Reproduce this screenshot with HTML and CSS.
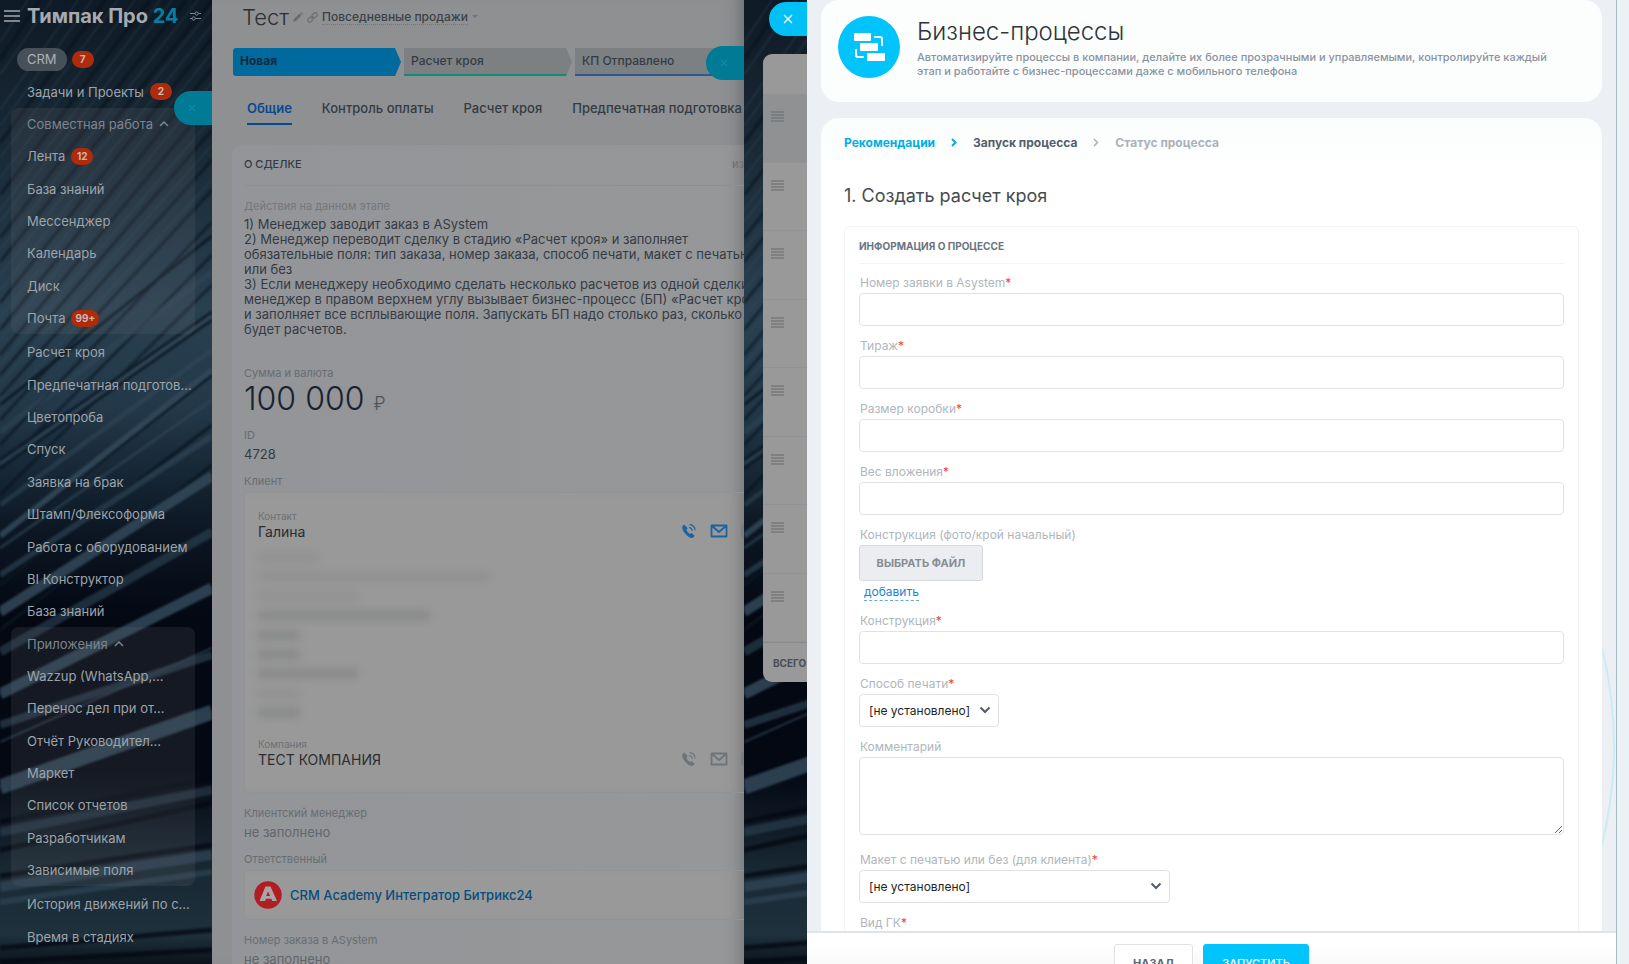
FILE: index.html
```html
<!DOCTYPE html>
<html lang="ru">
<head>
<meta charset="utf-8">
<title>Тимпак Про 24</title>
<link rel="stylesheet" href="styles.css">
</head>
<body>
<svg class="sprite" aria-hidden="true">
  <symbol id="phone" viewBox="0 0 16 16"><path fill="currentColor" d="M3.2 1.6 1.6 3c-.8 1-.4 4 2 7s5.400 5 7.400 5c1 0 2.300-1 2.500-2.200L10.800 10l-1.800 1C7.500 10.200 6 8.200 5.500 6.700L6.700 5.300z"/><path fill="none" stroke="currentColor" stroke-width="1.200" d="M8 4.500c1.800.1 3 1.400 3.200 3.300M8.600 1.600c3.100.2 5.200 2.300 5.500 5.600"/></symbol>
  <symbol id="mail" viewBox="0 0 18 16"><path fill="none" stroke="currentColor" stroke-width="1.800" stroke-linejoin="round" d="M1.500 2.500h15v11h-15zM2 3l7 6 7-6"/></symbol>
  <symbol id="grip" viewBox="0 0 13 11"><path stroke="currentColor" stroke-width="1.500" d="M0 1h13M0 4h13M0 7h13M0 10h13"/></symbol>
  <symbol id="down" viewBox="0 0 12 8"><path fill="none" stroke="currentColor" stroke-width="2" d="m1.500 1.500 4.500 4.500 4.500-4.500"/></symbol>
  <symbol id="up" viewBox="0 0 10 6"><path fill="none" stroke="currentColor" stroke-width="1.500" d="m1 5 4-4 4 4"/></symbol>
  <symbol id="close" viewBox="0 0 10 10"><path stroke="currentColor" stroke-width="1.300" d="m1 1 8 8M9 1 1 9"/></symbol>
  <symbol id="streaks" viewBox="0 0 212 964" preserveAspectRatio="none">
    <g fill="none" stroke="#3c5364" stroke-width="1" opacity=".75">
      <path d="M0 42 28 0M0 75 52 0M0 110 78 0M0 126 92 0M0 158 118 0M0 178 135 0M0 210 160 0M0 222 172 0M0 250 198 0M0 275 212 8M0 290 212 25M0 318 212 52M0 340 212 82M0 365 212 118M0 384 212 145M0 408 212 180"/>
    </g>
    <g fill="none" stroke="#050e18" stroke-width="3" opacity=".6">
      <path d="M0 60 40 0M0 143 105 0M0 195 150 0M0 238 186 0M0 262 212 0M0 303 212 38M0 330 212 68M0 355 212 100M0 375 212 130M0 396 212 160M0 420 212 190M0 445 212 222M0 470 212 255M0 495 212 285"/>
    </g>
    <g fill="none" stroke="#0a1722" stroke-width="3"><path d="M0 405 212 236M0 460 212 312M0 468 212 320M0 540 212 375M0 585 212 425M0 630 212 465"/></g>
    <g fill="none" stroke="#33495a">
      <path stroke-width="6" opacity=".55" d="M0 432 212 272"/>
      <path stroke-width="4" opacity=".7" d="M0 464 212 316"/>
      <path stroke-width="5" opacity=".6" d="M0 505 212 350"/>
      <path stroke-width="6" d="M0 536 212 370"/>
      <path stroke-width="3" opacity=".7" d="M0 548 212 400"/>
      <path stroke-width="6" opacity=".7" d="M0 575 212 436"/>
      <path stroke-width="10" d="M0 612 212 476"/>
      <path stroke-width="9" opacity=".65" d="M0 652 212 532"/>
      <path stroke-width="11" d="M0 694 212 588"/>
      <path stroke-width="2" opacity=".8" d="M0 742 212 648"/>
      <path stroke-width="8" opacity=".7" d="M0 725 212 655"/>
      <path stroke-width="15" d="M0 787 212 712"/>
      <path stroke-width="9" opacity=".6" d="M0 832 212 790"/>
      <path stroke-width="10" opacity=".8" d="M0 887 212 855"/>
      <path stroke-width="6" opacity=".7" d="M0 902 212 872"/>
    </g>
    <g fill="none" stroke="#020710" stroke-width="5" opacity=".85"><path d="M0 822 212 778M0 850 212 803M0 876 212 845M0 948 212 930M0 962 212 950"/></g>
  </symbol>
</svg>

<div class="app">
  <aside class="sidebar">
    <svg class="streaks"><use href="#streaks"/></svg>
    <header class="brand">
      <button class="plain" aria-label="Меню"><svg width="16" height="12" viewBox="0 0 16 12"><path stroke="currentColor" stroke-width="2" d="M0 1h16M0 6h16M0 11h16"/></svg></button>
      <strong class="brand-name">Тимпак Про <span class="brand-num">24</span></strong>
      <button class="plain" aria-label="Настройки"><svg width="11" height="10" viewBox="0 0 11 10"><path fill="none" stroke="currentColor" stroke-width="1.200" d="M0 2.500h5M8.500 2.500H11M0 7.500h2M5.500 7.500H11"/><circle cx="6.700" cy="2.500" r="1.600" fill="none" stroke="currentColor"/><circle cx="3.700" cy="7.500" r="1.600" fill="none" stroke="currentColor"/></svg></button>
    </header>
    <nav class="menu">
      <a class="item" href="#"><span class="active">CRM</span><b class="badge">7</b></a>
      <a class="item" href="#">Задачи и Проекты<b class="badge">2</b></a>
      <div class="group g7">
        <a class="item muted" href="#">Совместная работа<svg width="10" height="6"><use href="#up"/></svg></a>
        <a class="item" href="#">Лента<b class="badge">12</b></a>
        <a class="item" href="#">База знаний</a>
        <a class="item" href="#">Мессенджер</a>
        <a class="item" href="#">Календарь</a>
        <a class="item" href="#">Диск</a>
        <a class="item" href="#">Почта<b class="badge">99+</b></a>
      </div>
      <a class="item" href="#">Расчет кроя</a>
      <a class="item" href="#">Предпечатная подготов...</a>
      <a class="item" href="#">Цветопроба</a>
      <a class="item" href="#">Спуск</a>
      <a class="item" href="#">Заявка на брак</a>
      <a class="item" href="#">Штамп/Флексоформа</a>
      <a class="item" href="#">Работа с оборудованием</a>
      <a class="item" href="#">BI Конструктор</a>
      <a class="item" href="#">База знаний</a>
      <div class="group g8">
        <a class="item muted" href="#">Приложения<svg width="10" height="6"><use href="#up"/></svg></a>
        <a class="item" href="#">Wazzup (WhatsApp,...</a>
        <a class="item" href="#">Перенос дел при от...</a>
        <a class="item" href="#">Отчёт Руководител...</a>
        <a class="item" href="#">Маркет</a>
        <a class="item" href="#">Список отчетов</a>
        <a class="item" href="#">Разработчикам</a>
        <a class="item" href="#">Зависимые поля</a>
      </div>
      <a class="item" href="#">История движений по с...</a>
      <a class="item" href="#">Время в стадиях</a>
    </nav>
    <button class="tab tab-side" aria-label="Закрыть"><svg width="8" height="8"><use href="#close"/></svg></button>
  </aside>

  <main class="deal">
    <header class="deal-head">
      <h1 class="deal-title">Тест</h1>
      <svg width="10" height="10" viewBox="0 0 10 10"><path fill="#676b70" d="m0 10 1-3 5.500-5.500 2 2L3 9zM7.200.8 8 0l2 2-.8.800z"/></svg>
      <svg width="11" height="11" viewBox="0 0 11 11"><g fill="none" stroke="#6d7175" stroke-width="1.200" transform="rotate(-45 5.500 5.500)"><rect x="-.5" y="3.500" width="6" height="4" rx="2"/><rect x="5.500" y="3.500" width="6" height="4" rx="2"/><path d="M3.500 5.500h4"/></g></svg>
      <span class="funnel">Повседневные продажи</span>
      <svg width="6" height="4" viewBox="0 0 6 4"><path fill="#73777b" d="M0 0h6L3 3z"/></svg>
    </header>
    <div class="stages">
      <div class="stage stage-now">Новая</div>
      <div class="stage stage-green">Расчет кроя</div>
      <div class="stage stage-blue">КП Отправлено</div>
    </div>
    <nav class="deal-tabs">
      <a class="deal-tab current" href="#">Общие</a>
      <a class="deal-tab" href="#">Контроль оплаты</a>
      <a class="deal-tab" href="#">Расчет кроя</a>
      <a class="deal-tab" href="#">Предпечатная подготовка</a>
    </nav>
    <section class="about">
      <header class="about-head"><h2 class="about-title">О СДЕЛКЕ</h2><a class="edit" href="#">изменить</a></header>
      <div class="label first">Действия на данном этапе</div>
      <p class="steps">1) Менеджер заводит заказ в ASystem<br>2) Менеджер переводит сделку в стадию «Расчет кроя» и заполняет<br>обязательные поля: тип заказа, номер заказа, способ печати, макет с печатью<br>или без<br>3) Если менеджеру необходимо сделать несколько расчетов из одной сделки,<br>менеджер в правом верхнем углу вызывает бизнес-процесс (БП) «Расчет кроя»<br>и заполняет все всплывающие поля. Запускать БП надо столько раз, сколько<br>будет расчетов.</p>
      <div class="label">Сумма и валюта</div>
      <div class="sum">100 000 <span class="rub">₽</span></div>
      <div class="label">ID</div>
      <div class="value">4728</div>
      <div class="label">Клиент</div>
      <div class="client">
        <div class="person">
          <div><div class="small">Контакт</div><div class="name">Галина</div></div>
          <div class="acts on"><svg width="16" height="16"><use href="#phone"/></svg><svg width="18" height="16"><use href="#mail"/></svg><i class="chat"></i></div>
        </div>
        <div class="hidden-data" aria-hidden="true">
          <i class="smear w60 faint"></i><i class="smear w230 faint"></i><i class="smear w100 faint"></i><i class="smear w170"></i><i class="smear w40"></i><i class="smear w40"></i><i class="smear w100"></i><i class="smear w40 faint"></i><i class="smear w40"></i>
        </div>
        <div class="person">
          <div><div class="small">Компания</div><div class="name">ТЕСТ КОМПАНИЯ</div></div>
          <div class="acts"><svg width="16" height="16"><use href="#phone"/></svg><svg width="18" height="16"><use href="#mail"/></svg><i class="chat"></i></div>
        </div>
      </div>
      <div class="label">Клиентский менеджер</div>
      <div class="value empty">не заполнено</div>
      <div class="label">Ответственный</div>
      <div class="user">
        <svg width="28" height="28" viewBox="0 0 28 28"><circle cx="14" cy="14" r="13.700" fill="#b01e22"/><path fill="#a9a5a5" fill-rule="evenodd" d="M11.500 5.500h5L23 20h-4.700l-1-2.300h-5.200L11 20H5.500zM14.100 10.500l-2 4.500h4z"/></svg>
        <a class="user-link" href="#">CRM Academy Интегратор Битрикс24</a>
      </div>
      <div class="label">Номер заказа в ASystem</div>
      <div class="value empty">не заполнено</div>
    </section>
    <button class="tab tab-deal" aria-label="Закрыть"><svg width="8" height="8"><use href="#close"/></svg></button>
  </main>

  <section class="behind">
    <svg class="streaks"><use href="#streaks"/></svg>
    <div class="list">
      <div class="list-head"></div>
      <div class="rows">
        <div class="row lit"><svg width="13" height="11"><use href="#grip"/></svg></div>
        <div class="row"><svg width="13" height="11"><use href="#grip"/></svg></div>
        <div class="row"><svg width="13" height="11"><use href="#grip"/></svg></div>
        <div class="row"><svg width="13" height="11"><use href="#grip"/></svg></div>
        <div class="row"><svg width="13" height="11"><use href="#grip"/></svg></div>
        <div class="row"><svg width="13" height="11"><use href="#grip"/></svg></div>
        <div class="row"><svg width="13" height="11"><use href="#grip"/></svg></div>
        <div class="row"><svg width="13" height="11"><use href="#grip"/></svg></div>
      </div>
      <div class="list-foot">ВСЕГО</div>
    </div>
    <button class="tab tab-live" aria-label="Закрыть"><svg width="10" height="10"><use href="#close"/></svg></button>
  </section>

  <section class="panel">
    <div class="scroll">
      <svg class="ring" width="14" height="200" viewBox="0 0 14 200"><path fill="none" stroke="#c9edf7" stroke-width="2" d="M0 1Q24 98 0 198"/></svg>
      <header class="hero">
        <svg width="62" height="62" viewBox="0 0 62 62"><circle cx="31" cy="31" r="31" fill="#00c4fb"/><g fill="#fff"><rect x="16" y="17" width="17" height="8" rx="1"/><rect x="22" y="27" width="18" height="8" rx="1"/><rect x="29" y="37" width="18" height="8" rx="1"/></g><path fill="none" stroke="#fff" stroke-width="2" stroke-linecap="round" d="M37 21h5q2 0 2 2v6M18 34v5q0 2 2 2h5"/></svg>
        <div>
          <h2 class="hero-title">Бизнес-процессы</h2>
          <p class="hero-text">Автоматизируйте процессы в компании, делайте их более прозрачными и управляемыми, контролируйте каждый этап и работайте с бизнес-процессами даже с мобильного телефона</p>
        </div>
      </header>
      <form class="card" id="start">
        <ol class="crumbs">
          <li class="crumb done">Рекомендации</li>
          <li class="arrow done"><svg width="6" height="9" viewBox="0 0 6 9"><path fill="none" stroke="currentColor" stroke-width="2" d="m1 1 3.500 3.500L1 8"/></svg></li>
          <li class="crumb now">Запуск процесса</li>
          <li class="arrow"><svg width="6" height="9" viewBox="0 0 6 9"><path fill="none" stroke="currentColor" stroke-width="1.500" d="m1 1 3.500 3.500L1 8"/></svg></li>
          <li class="crumb">Статус процесса</li>
        </ol>
        <h3 class="card-title">1. Создать расчет кроя</h3>
        <div class="box">
          <h4 class="box-title">ИНФОРМАЦИЯ О ПРОЦЕССЕ</h4>
          <div class="field"><label class="flabel" for="f1">Номер заявки в Asystem<span class="req">*</span></label><input class="input" id="f1" type="text"></div>
          <div class="field"><label class="flabel" for="f2">Тираж<span class="req">*</span></label><input class="input" id="f2" type="text"></div>
          <div class="field"><label class="flabel" for="f3">Размер коробки<span class="req">*</span></label><input class="input" id="f3" type="text"></div>
          <div class="field"><label class="flabel" for="f4">Вес вложения<span class="req">*</span></label><input class="input" id="f4" type="text"></div>
          <div class="field file"><label class="flabel" for="f5">Конструкция (фото/крой начальный)</label><button class="choose" id="f5" type="button">ВЫБРАТЬ ФАЙЛ</button><a class="add" href="#">добавить</a></div>
          <div class="field"><label class="flabel" for="f6">Конструкция<span class="req">*</span></label><input class="input" id="f6" type="text"></div>
          <div class="field"><label class="flabel" for="f7">Способ печати<span class="req">*</span></label><div class="pick narrow"><select class="input select" id="f7"><option>[не установлено]</option></select><svg class="chev" width="12" height="8"><use href="#down"/></svg></div></div>
          <div class="field long"><label class="flabel" for="f8">Комментарий</label><textarea class="input area" id="f8"></textarea></div>
          <div class="field"><label class="flabel" for="f9">Макет с печатью или без (для клиента)<span class="req">*</span></label><div class="pick wide"><select class="input select" id="f9"><option>[не установлено]</option></select><svg class="chev" width="12" height="8"><use href="#down"/></svg></div></div>
          <div class="field"><label class="flabel" for="f10">Вид ГК<span class="req">*</span></label><input class="input" id="f10" type="text"></div>
        </div>
      </form>
    </div>
    <footer class="foot">
      <button class="btn" type="button">НАЗАД</button>
      <button class="btn go" type="submit" form="start">ЗАПУСТИТЬ</button>
    </footer>
  </section>
  <div class="edge"></div>
</div>
</body>
</html>
```
FILE: styles.css
```css
* { box-sizing: border-box; }
body { margin: 0; font-family: Inter, "Liberation Sans", sans-serif; font-size: 13px; }
h1, h2, h3, h4, p, ol { margin: 0; padding: 0; font-weight: 400; }
a { color: inherit; text-decoration: none; }
button { font-family: inherit; border: 0; cursor: pointer; }
svg { flex: none; }
.sprite { position: absolute; width: 0; height: 0; }

.app { display: grid; grid-template-columns: 212px minmax(0, 532fr) 63px minmax(0, 810fr) 12px; height: 100vh; overflow: hidden; }
.sidebar, .behind { background: linear-gradient(#0e1a25 0%, #192936 15%, #294050 32%, #23394a 42%, #0c1723 55%, #030813 64%, #030813 80%, #182833 90%, #1e313d 97%, #0a121b 100%); position: relative; min-width: 0; }
.streaks { position: absolute; top: 0; left: 0; width: 100%; height: 100%; opacity: .85; filter: blur(1px); }
.behind .streaks { width: 212px; }
.behind { overflow: hidden; }

.sidebar { display: flex; flex-direction: column; padding-bottom: 11px; color: #9da4aa; }
.brand { position: relative; display: flex; align-items: center; gap: 7px; height: 43px; padding: 0 4px 11px 4px; white-space: nowrap; }
.plain { display: flex; padding: 0; background: none; color: #7e878e; }
.brand-name { margin-right: 4px; font-size: 20px; font-weight: 700; color: #a5abb0; }
.brand-num { color: #087f9e; }
.menu { position: relative; display: flex; flex-direction: column; flex: 1; min-height: 0; }
.item { display: flex; align-items: center; flex: 1 1 0; gap: 6px; padding-left: 27px; font-size: 13px; white-space: nowrap; min-height: 0; }
.active { margin-left: -10px; padding: 3px 10px 4px; border-radius: 12px; background: #474f58; color: #adb2b6; }
.active + .badge { margin-left: -1px; }
.badge { min-width: 22px; padding: 0 4px; border-radius: 9px; background: #b02b0c; color: #cbb7b1; font-size: 10px; line-height: 17px; font-weight: 700; text-align: center; }
.muted { color: #7c858d; }
.group { display: flex; flex-direction: column; margin: 0 17px 2px 11px; border-radius: 8px; background: rgba(110, 112, 120, .17); }
.group .item { padding-left: 16px; }
.g7 { flex: 7 1 0; }
.g8 { flex: 8 1 0; }

.tab { position: absolute; right: 0; display: flex; align-items: center; justify-content: center; width: 38px; height: 34px; padding: 0 2px 0 0; border-radius: 17px 0 0 17px; background: #007a95; color: #0b8fab; }
.tab-side { top: 91px; }
.tab-deal { top: 46px; }
.tab-live { top: 2px; padding-right: 0; background: #00c0f5; color: #fff; }

.deal { position: relative; min-width: 0; overflow: hidden; padding-left: 20px; background: #8e9092; box-shadow: inset -18px 0 18px -16px #66686a; white-space: nowrap; color: #343b44; }
.deal-head { display: flex; align-items: center; gap: 4px; height: 34px; padding-left: 10px; }
.deal-title { font-size: 22px; font-weight: 300; color: #2b2f34; }
.funnel { font-size: 12px; font-weight: 500; color: #3c4147; border-bottom: 1px dotted #777; }
.stages { display: flex; gap: 3px; margin: 14px 0 0 1px; }
.stage { flex: none; width: 168px; height: 28px; padding: 0 7px; border-bottom: 2px solid; font-size: 12px; font-weight: 500; line-height: 26px; background: #7c8083; clip-path: polygon(0 0, 162px 0, 168px 50%, 162px 100%, 0 100%); }
.stage-now { border-color: #006a9f; background: #006a9f; color: #13293a; font-weight: 700; border-radius: 3px; }
.stage-green { border-color: #118a76; }
.stage-blue { border-color: #2b5a96; }
.deal-tabs { display: flex; gap: 30px; margin: 22px 0 0 15px; }
.deal-tab { height: 27px; font-size: 13px; font-weight: 500; line-height: 20px; color: #343b43; }
.current { color: #0a4891; font-weight: 600; border-bottom: 2px solid #0a4891; }

.about { margin-top: 20px; padding: 0 0 0 12px; border-radius: 10px 0 0 0; background: linear-gradient(to right, #939598, #969798); box-shadow: inset -18px 0 18px -16px #707274; min-height: 830px; }
.about-head { display: flex; justify-content: space-between; height: 41px; border-bottom: 1px solid #8d8f91; line-height: 38px; }
.about-title { font-size: 11px; font-weight: 500; color: #343b43; }
.edit { width: 12px; overflow: hidden; font-size: 11px; color: #6a6e73; }
.label { height: 15px; font-size: 11px; line-height: 15px; color: #686d73; }
.first { margin-top: 13px; color: #74777b; }
.steps { margin: 3px 0 29px; font-size: 13px; line-height: 15px; }
.sum { height: 35px; margin-bottom: 12px; font-size: 32px; font-weight: 300; line-height: 36px; color: #182230; }
.rub { font-size: 18px; color: #4d5359; }
.value { height: 22px; margin-bottom: 9px; font-size: 13px; line-height: 22px; }
.empty { color: #61666c; }
.client { height: 301px; margin: 3px 0 13px; padding: 16px 0 0 13px; border: 1px solid #929395; border-right: 0; border-radius: 4px 0 0 4px; background: #999; box-shadow: inset -18px 0 18px -16px #747474; }
.person { display: flex; justify-content: space-between; align-items: flex-end; }
.small { font-size: 10px; line-height: 14px; color: #6d7074; }
.name { font-size: 14px; line-height: 18px; color: #2b2d30; }
.acts { display: flex; align-items: center; gap: 13px; height: 20px; color: #6f7478; overflow: hidden; }
.on { color: #1e639f; }
.chat { width: 3px; height: 14px; border-radius: 7px 0 0 7px; background: #7b7e80; }
.hidden-data { display: flex; flex-direction: column; justify-content: space-between; height: 164px; margin: 12px 0 20px; }
.smear { height: 9px; background: #7f8081; filter: blur(4px); opacity: .7; }
.faint { opacity: .35; }
.w40 { width: 42px; }
.w60 { width: 60px; }
.w100 { width: 100px; }
.w170 { width: 172px; }
.w230 { width: 232px; }
.user { display: flex; align-items: center; gap: 8px; height: 50px; margin: 3px 0 13px; padding-left: 9px; border: 1px solid #929395; border-right: 0; background: #999; box-shadow: inset -18px 0 18px -16px #747474; }
.user-link { font-size: 13px; font-weight: 500; color: #064d7d; }

.behind { display: flex; padding: 54px 0 0 19px; align-items: flex-start; }
.list { position: relative; width: 100%; border-radius: 9px 0 0 9px; overflow: hidden; background: #999; }
.list-head { height: 40px; }
.rows { display: flex; flex-direction: column; height: 549px; border-bottom: 1px solid #87898b; }
.row { flex: 1; padding: 15px 0 0 8px; border-bottom: 1px solid #919293; color: #75787b; }
.lit { background: #8f9193; }
.list-foot { height: 39px; padding-left: 10px; font-size: 10px; font-weight: 700; line-height: 41px; color: #484d54; }

.panel { display: flex; flex-direction: column; min-width: 0; height: 100vh; background: #ecf0f4; border-right: 1px solid #a3bac9; }
.scroll { position: relative; flex: 1; min-height: 0; overflow: hidden; padding: 0 14px; }
.ring { position: absolute; right: 0; top: 647px; }
.hero { display: flex; gap: 17px; height: 102px; padding: 16px 42px 0 17px; border-radius: 18px; background: #fcfefe; }
.hero-title { font-size: 24px; font-weight: 300; line-height: 32px; color: #2f343a; }
.hero-text { margin-top: 2px; font-size: 11px; font-weight: 500; line-height: 14px; color: #8b939e; }
.card { margin-top: 16px; padding: 0 23px; border-radius: 18px 18px 0 0; background: linear-gradient(#fbfdfd 0, #fff 60px); }
.crumbs { display: flex; align-items: center; gap: 16px; height: 49px; list-style: none; font-size: 12px; font-weight: 700; color: #abb1b8; }
.arrow { display: flex; }
.done { color: #00afe3; }
.now { color: #535e6b; }
.card-title { height: 59px; padding-top: 15px; font-size: 18px; line-height: 28px; color: #464b51; }
.box { padding: 0 14px; border: 1px solid #f2f4f5; border-radius: 6px; }
.box-title { height: 37px; margin-bottom: 9px; border-bottom: 1px solid #f2f4f5; font-size: 10px; font-weight: 700; line-height: 39px; color: #6a7480; }
.field { display: flex; flex-direction: column; align-items: flex-start; margin-bottom: 10px; }
.flabel { height: 20px; padding-left: 1px; font-size: 12px; line-height: 20px; color: #b0b6bc; }
.req { color: #ff3a2f; }
.input { display: block; width: 100%; height: 33px; padding: 0 9px; border: 1px solid #dfe3e6; border-radius: 4px; background: #fff; font-family: inherit; font-size: 12px; font-weight: 400; color: #1f2327; }
.choose { width: 124px; height: 36px; padding: 0; border: 1px solid #d5d9de; border-radius: 3px; background: #ebedf1; font-size: 11px; font-weight: 700; color: #868d95; }
.file { margin-bottom: 10px; }
.add { margin: 3px 0 0 5px; border-bottom: 1px dashed #62a9de; font-size: 12px; line-height: 16px; color: #1c86d1; }
.pick { position: relative; }
.narrow { width: 140px; }
.wide { width: 311px; }
.select { appearance: none; }
.chev { position: absolute; right: 8px; top: 12px; color: #535c69; pointer-events: none; }
.area { height: 78px; resize: vertical; }
.long { margin-bottom: 15px; }
.foot { position: relative; display: flex; justify-content: center; gap: 10px; height: 33px; flex: none; overflow: hidden; padding-top: 11px; border-top: 2px solid #dfe2e6; background: linear-gradient(#fff 12px, #f9f9f9); }
.btn { flex: none; height: 38px; padding: 0 18px; border: 1px solid #dfe3e6; border-radius: 3px; background: #fff; font-size: 11px; font-weight: 700; line-height: 34px; color: #5f6873; }
.go { border-color: #00c4fb; background: #00c4fb; color: #fff; font-weight: 500; }
.edge { background: #ecf1f3; }
```
